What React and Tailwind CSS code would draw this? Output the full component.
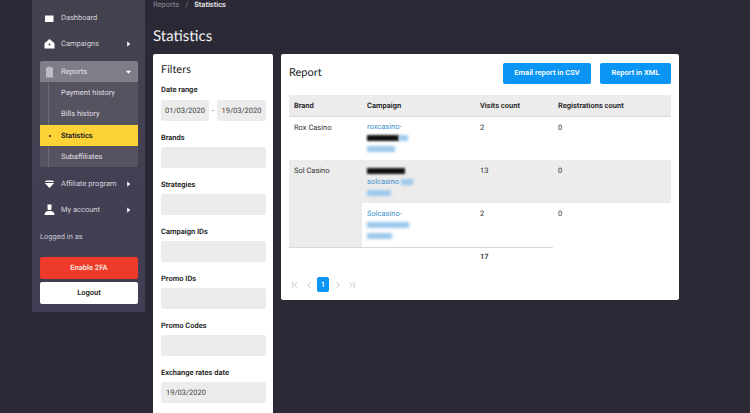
import { ChevronFirst, ChevronLast, ChevronLeft, ChevronRight } from 'lucide-react';

const Arrow = ({ down }) => (
  <svg width="7" height="7" viewBox="0 0 8 8" className="absolute right-[6px] top-1/2 -translate-y-1/2 fill-white">
    {down ? <path d="M1 2.5h6L4 6z" /> : <path d="M2.5 1v6L6 4z" />}
  </svg>
);

const icons = {
  dashboard: <path d="M1 3.5 H9.5 V10 H1Z" />,
  campaigns: <path fillRule="evenodd" d="M5.5 1 L9 4 Q10.5 4.5 10.5 6 V10.5 H0.5 V6 Q0.5 4.5 2 4Z M4.5 6.5 a1 1 0 1 0 2 0 a1 1 0 1 0 -2 0Z" />,
  reports: <path opacity="0.5" d="M4.5 0.5 H6.5 V1.5 H9 V11.5 H2 V1.5 H4.5Z" />,
  affiliate: <path d="M0.5 4 L2.5 2.5 H8.5 L10.5 4 Z M0.8 5 H10.2 L5.5 10Z" />,
  account: <path d="M3.5 0.5 H7.5 V4.5 Q7.5 5.5 6.5 6 H4.5 Q3.5 5.5 3.5 4.5Z M0.5 11 Q0.5 8 3.5 7 H7.5 Q10.5 8 10.5 11Z" />,
};

const MainItem = ({ icon, label, arrow }) => (
  <div className="relative flex h-[26px] items-center pl-[4px] text-[#d3d2da]">
    <svg width="11" height="12" viewBox="0 0 11 12" className="fill-white">
      {icons[icon]}
    </svg>
    <span className="ml-[6px]">{label}</span>
    {arrow && <Arrow />}
  </div>
);

const SubItem = ({ label, className }) => (
  <div className={`flex items-center pl-[21px] text-[#e0dfe6] ${className}`}>{label}</div>
);

const Field = ({ label, value }) => (
  <div className="mt-[11px]">
    <div className="font-semibold leading-[11px] text-[#222]">{label}</div>
    <div className="mt-[4px] flex h-[21px] items-center rounded-[2px] bg-[#ececec] pl-[5px] text-[#444]">{value}</div>
  </div>
);

const Redacted = ({ w, dark }) => (
  <span className={`inline-block h-[6px] align-middle ${dark ? 'bg-[#111] blur-[1px]' : 'bg-[#9cc8ec] blur-[1.5px]'}`} style={{ width: w }} />
);

const Line = ({ children }) => <div className="flex h-[11px] items-center whitespace-nowrap text-[#3d8fd0]">{children}</div>;

export default function App() {
  return (
    <div className="flex h-[413px] w-[750px] items-start gap-[8px] overflow-hidden bg-[#2a2935] pl-[32px] font-['Roboto','Liberation_Sans',sans-serif] text-[7.5px] [text-rendering:geometricPrecision]">
      <aside className="h-[312px] w-[113px] shrink-0 bg-gradient-to-b from-[#44414f] to-[#413e55] pl-[8px] pr-[7px] pt-[5px]">
        <MainItem icon="dashboard" label="Dashboard" />
        <MainItem icon="campaigns" label="Campaigns" arrow />
        <div className="mt-[4px] overflow-hidden rounded-[2px] bg-[#55535f]">
          <div className="relative flex h-[21px] items-center bg-[#7f7d88] pl-[4px] text-[#e4e3e8]">
            <svg width="11" height="12" viewBox="0 0 11 12" className="fill-white">{icons.reports}</svg>
            <span className="ml-[6px]">Reports</span>
            <Arrow down />
          </div>
          <div className="relative">
            <SubItem label="Payment history" className="h-[21px]" />
            <SubItem label="Bills history" className="h-[22px]" />
            <div className="flex h-[21px] items-center bg-[#fdd237] pl-[21px] font-semibold text-[#222]">Statistics</div>
            <SubItem label="Subaffiliates" className="h-[21px]" />
            <span className="absolute left-[8px] top-0 h-[43px] w-px bg-[#6b6975]" />
            <span className="absolute left-[8px] top-[64px] h-[21px] w-px bg-[#6b6975]" />
            <span className="absolute left-[9px] top-[53px] h-[2px] w-[2px] rounded-full bg-[#222]" />
          </div>
        </div>
        <div className="mt-[4px]">
          <MainItem icon="affiliate" label="Affiliate program" arrow />
          <MainItem icon="account" label="My account" arrow />
        </div>
        <div className="mt-[8px] leading-[12px] text-[#c9c8d0]">Logged in as</div>
        <div className="mt-[14px] flex h-[22px] items-center justify-center rounded-[2px] bg-[#ee3a2a] font-semibold text-[#f7e4df]">Enable 2FA</div>
        <div className="mt-[3px] flex h-[22px] items-center justify-center rounded-[2px] bg-white font-semibold text-[#222]">Logout</div>
      </aside>

      <main className="min-w-0 flex-1">
        <div className="flex h-[9px] items-center gap-[6px] text-[#8d8c95]">
          <span>Reports</span>
          <span>/</span>
          <span className="font-semibold text-[#e6e6e6]">Statistics</span>
        </div>
        <h1 className="mt-[17px] h-[28px] font-['Lato',sans-serif] text-[15px] leading-[20px] text-[#f1f1f1]">Statistics</h1>
        <div className="flex items-start gap-[8px]">
          <section className="h-[400px] w-[120px] shrink-0 rounded-t-[2px] bg-white pl-[8px] pr-[7px] pt-[9px]">
            <h2 className="font-['Lato',sans-serif] text-[11px] leading-[14px] text-[#222]">Filters</h2>
            <div className="mt-[7px] font-semibold leading-[12px] text-[#222]">Date range</div>
            <div className="mt-[4px] flex items-center justify-between text-[#444]">
              <div className="flex h-[21px] w-[48px] items-center justify-center rounded-[2px] bg-[#ececec]">01/03/2020</div>
              <span>-</span>
              <div className="flex h-[21px] w-[49px] items-center justify-center rounded-[2px] bg-[#ececec]">19/03/2020</div>
            </div>
            <Field label="Brands" />
            <Field label="Strategies" />
            <Field label="Campaign IDs" />
            <Field label="Promo IDs" />
            <Field label="Promo Codes" />
            <Field label="Exchange rates date" value="19/03/2020" />
          </section>

          <section className="h-[246px] w-[398px] shrink-0 rounded-[2px] bg-white px-[8px] pt-[8px]">
            <div className="flex h-[22px] items-center">
              <h2 className="flex-1 pt-[1px] font-['Lato',sans-serif] text-[11px] text-[#222]">Report</h2>
              <button className="h-[21px] w-[88px] rounded-[2px] bg-[#0a95f5] font-semibold text-white">Email report in CSV</button>
              <button className="ml-[9px] h-[21px] w-[71px] rounded-[2px] bg-[#0a95f5] font-semibold text-white">Report in XML</button>
            </div>
            <table className="mt-[11px] w-[382px] table-fixed border-collapse text-[#333]">
              <colgroup>
                <col className="w-[73px]" />
                <col className="w-[113px]" />
                <col className="w-[78px]" />
                <col className="w-[118px]" />
              </colgroup>
              <thead>
                <tr className="h-[21px] border-b border-[#d9d9d9] bg-[#ececec] text-left text-[#222]">
                  <th className="pl-[5px] font-semibold">Brand</th>
                  <th className="pl-[5px] font-semibold">Campaign</th>
                  <th className="pl-[5px] font-semibold">Visits count</th>
                  <th className="pl-[5px] font-semibold">Registrations count</th>
                </tr>
              </thead>
              <tbody>
                <tr className="h-[44px] align-top">
                  <td className="pl-[5px] pt-[5px] leading-[11px]">Rox Casino</td>
                  <td className="pl-[5px] pt-[5px]">
                    <Line>roxcasino-</Line>
                    <Line><Redacted w={32} dark /><Redacted w={9} /></Line>
                    <Line><Redacted w={28} /></Line>
                  </td>
                  <td className="pl-[5px] pt-[5px] leading-[11px]">2</td>
                  <td className="pl-[5px] pt-[5px] leading-[11px]">0</td>
                </tr>
                <tr className="h-[43px] bg-[#ececec] align-top">
                  <td rowSpan={2} className="bg-[#ececec] pl-[5px] pt-[5px] leading-[11px]">Sol Casino</td>
                  <td className="pl-[5px] pt-[5px]">
                    <Line><Redacted w={38} dark /></Line>
                    <Line>solcasino&nbsp;<Redacted w={12} /></Line>
                    <Line><Redacted w={24} /></Line>
                  </td>
                  <td className="pl-[5px] pt-[5px] leading-[11px]">13</td>
                  <td className="pl-[5px] pt-[5px] leading-[11px]">0</td>
                </tr>
                <tr className="h-[44px] align-top">
                  <td className="pl-[5px] pt-[5px]">
                    <Line>Solcasino-</Line>
                    <Line><Redacted w={42} /></Line>
                    <Line><Redacted w={25} /></Line>
                  </td>
                  <td className="pl-[5px] pt-[5px] leading-[11px]">2</td>
                  <td className="pl-[5px] pt-[5px] leading-[11px]">0</td>
                </tr>
                <tr className="h-[19px] font-semibold">
                  <td colSpan={2} className="border-t border-[#d9d9d9]"></td>
                  <td className="border-t border-[#d9d9d9] pl-[5px]">17</td>
                  <td></td>
                </tr>
              </tbody>
            </table>
            <div className="mt-[11px] flex h-[15px] items-center pl-[1px] text-[#bdbdbd]">
              <ChevronFirst size={10} />
              <ChevronLeft size={10} className="ml-[4px]" />
              <span className="ml-[3px] flex h-[15px] w-[12px] items-center justify-center rounded-[2px] bg-[#0a95f5] font-semibold text-white">1</span>
              <ChevronRight size={10} className="ml-[4px]" />
              <ChevronLast size={10} className="ml-[4px]" />
            </div>
          </section>
        </div>
      </main>
    </div>
  );
}
